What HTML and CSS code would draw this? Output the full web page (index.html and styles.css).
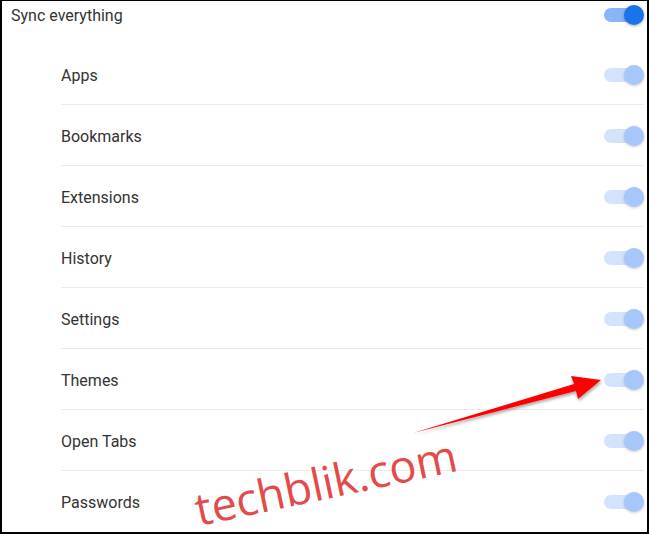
FILE: index.html
```html
<!DOCTYPE html>
<html lang="en">
<head>
    <meta charset="UTF-8">
    <title>Sync settings</title>
    <link rel="stylesheet" href="styles.css">
</head>
<body>
    <div class="frame">
        <div class="sync-row">
            <span class="label">Sync everything</span>
            <span class="toggle on"><span class="track"></span><span class="thumb"></span></span>
        </div>

        <div class="sync-list">
            <div class="sync-item"><span class="label">Apps</span><span class="toggle"><span class="track"></span><span class="thumb"></span></span></div>
            <div class="sync-item"><span class="label">Bookmarks</span><span class="toggle"><span class="track"></span><span class="thumb"></span></span></div>
            <div class="sync-item"><span class="label">Extensions</span><span class="toggle"><span class="track"></span><span class="thumb"></span></span></div>
            <div class="sync-item"><span class="label">History</span><span class="toggle"><span class="track"></span><span class="thumb"></span></span></div>
            <div class="sync-item"><span class="label">Settings</span><span class="toggle"><span class="track"></span><span class="thumb"></span></span></div>
            <div class="sync-item"><span class="label">Themes</span><span class="toggle"><span class="track"></span><span class="thumb"></span></span></div>
            <div class="sync-item"><span class="label">Open Tabs</span><span class="toggle"><span class="track"></span><span class="thumb"></span></span></div>
            <div class="sync-item"><span class="label">Passwords</span><span class="toggle"><span class="track"></span><span class="thumb"></span></span></div>
        </div>

        <svg class="arrow" width="649" height="534" viewBox="0 0 649 534">
            <defs>
                <filter id="shadow" x="-10%" y="-30%" width="120%" height="160%">
                    <feDropShadow dx="1" dy="2" stdDeviation="1.5" flood-color="#000" flood-opacity="0.35"/>
                </filter>
            </defs>
            <polygon points="413,433 574,384 571,376 601,380 578,399 576,391" fill="#ff0000" filter="url(#shadow)"/>
        </svg>

        <div class="watermark">techblik.com</div>
    </div>
</body>
</html>
```

FILE: styles.css
```css
* {
    margin: 0;
    padding: 0;
    box-sizing: border-box;
}

body {
    font-family: Roboto, 'Liberation Sans', sans-serif;
    background: #fff;
    color: #333;
    width: 649px;
    height: 534px;
    overflow: hidden;
}

.frame {
    position: relative;
    width: 649px;
    height: 534px;
    border-top: 1px solid #000;
    border-left: 2px solid #000;
    border-right: 2px solid #000;
    border-bottom: 2px solid #000;
    overflow: hidden;
}

.sync-row {
    display: flex;
    align-items: center;
    justify-content: space-between;
    height: 28px;
    padding: 0 3px 0 9px;
}

.label {
    font-size: 16px;
    color: #333;
}

.sync-list {
    margin: 15px 4px 0 59px;
}

.sync-item {
    display: flex;
    align-items: center;
    justify-content: space-between;
    height: 61px;
    padding-top: 1px;
    border-top: 1px solid #ebebeb;
    margin-right: -1px;
}

.sync-item:first-child {
    height: 60px;
    border-top: none;
}

.sync-item .label {
    padding-top: 1px;
}

.toggle {
    position: relative;
    display: block;
    width: 40px;
    height: 20px;
}

.track {
    position: absolute;
    left: 0;
    top: 3px;
    width: 34px;
    height: 14px;
    border-radius: 7px;
    background: #d3e3fc;
}

.thumb {
    position: absolute;
    right: 0;
    top: 0;
    width: 20px;
    height: 20px;
    border-radius: 50%;
    background: #a7c6f9;
    box-shadow: 0 1px 3px rgba(0, 0, 0, 0.2);
}

.toggle.on .track {
    background: #8ab4f8;
}

.toggle.on .thumb {
    background: #1a73e8;
    box-shadow: 0 1px 3px rgba(0, 0, 0, 0.35);
}

.arrow {
    position: absolute;
    left: -2px;
    top: -1px;
    pointer-events: none;
}

.watermark {
    position: absolute;
    left: 198px;
    top: 485px;
    font-family: 'Open Sans', 'DejaVu Sans', sans-serif;
    font-size: 45px;
    color: #e34b4b;
    transform: rotate(-12deg);
    transform-origin: left bottom;
    white-space: nowrap;
    line-height: 1;
}
```
